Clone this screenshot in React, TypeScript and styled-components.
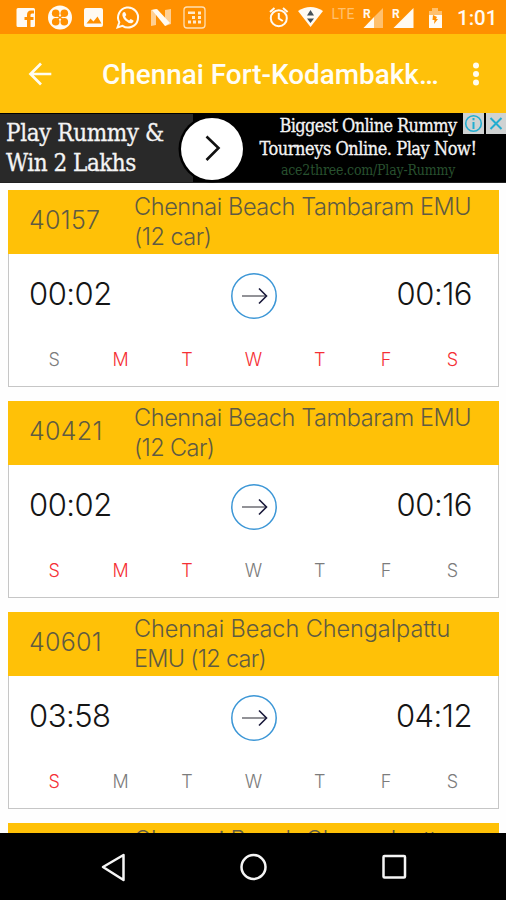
import React from 'react';
import styled, { createGlobalStyle } from 'styled-components';

const GlobalStyle = createGlobalStyle`
  * { box-sizing: border-box; }
  html, body { margin: 0; height: 100%; overflow: hidden; background: #fff; }
`;

const Screen = styled.div`
  width: 506px;
  height: 900px;
  display: flex;
  flex-direction: column;
  overflow: hidden;
  background: #fefefe;
  font-family: Inter, 'Liberation Sans', sans-serif;
`;

const StatusBar = styled.div`
  height: 34px;
  flex: none;
  background: #ff9000;
`;

const AppBar = styled.header`
  height: 79px;
  flex: none;
  display: flex;
  align-items: center;
  padding: 0 20px 0 28px;
  background: #ffc10a;
`;

const BackIcon = styled.svg`
  width: 24px;
  height: 24px;
  flex: none;
`;

const Title = styled.h1`
  margin: 2px 0 0 50px;
  width: 345px;
  white-space: nowrap;
  font: 500 27.9px/36px Roboto, sans-serif;
  color: #fffdf5;
`;

const MoreIcon = styled.svg`
  width: 10px;
  height: 26px;
  margin-left: auto;
  margin-right: 5px;
  flex: none;
`;

const AdBanner = styled.div`
  position: relative;
  height: 70px;
  flex: none;
  display: flex;
  background: #000;
  border-bottom: 1px solid #222;
  color: #f4f4f4;
  font-family: 'DejaVu Serif Condensed', 'DejaVu Serif', serif;
  font-stretch: condensed;
  white-space: nowrap;
  -webkit-text-stroke: 0.3px currentColor;
`;

const AdHeadline = styled.div`
  width: 193px;
  height: 68px;
  margin-top: 1px;
  padding: 4px 0 0 6px;
  background: #292929;
  font-size: 24px;
  line-height: 30px;
`;

const AdLine = styled.div<{ $spacing: number }>`
  letter-spacing: ${(p) => p.$spacing}px;
`;

const AdArrow = styled.svg`
  position: absolute;
  left: 178px;
  top: 2px;
  width: 68px;
  height: 68px;
`;

const AdCopy = styled.div`
  flex: 1;
  padding-right: 15px;
  display: flex;
  flex-direction: column;
  align-items: center;
  padding-left: 52px;
  font-size: 18px;
  line-height: 23px;
  padding-top: 1px;
`;

const AdLink = styled.div`
  font-size: 14px;
  line-height: 20px;
  letter-spacing: -0.2px;
  color: #28512f;
  -webkit-text-stroke: 0;
`;

const AdChoices = styled.svg`
  position: absolute;
  right: 0;
  top: 0;
  width: 43px;
  height: 21px;
`;

const TrainList = styled.main`
  flex: 1;
  min-height: 0;
  overflow: hidden;
  padding: 7px 7px 0 8px;
  display: flex;
  flex-direction: column;
  gap: 14px;
`;

const Card = styled.article`
  height: 197px;
  flex: none;
  display: flex;
  flex-direction: column;
  background: #fff;
  border: 1px solid #c6c6c6;
  border-top: 0;
`;

const CardHead = styled.div`
  height: 64px;
  margin: 0 -1px;
  flex: none;
  display: flex;
  background: #ffc107;
  color: #5f5b42;
  font-weight: 300;
`;

const TrainNumber = styled.div`
  width: 126px;
  padding-left: 21px;
  font-size: 25px;
  line-height: 60px;
  letter-spacing: 0.3px;
`;

const TrainName = styled.div`
  padding-top: 2px;
  font-size: 23.5px;
  line-height: 30px;
`;

const NameLine = styled.div<{ $tracking: number }>`
  white-space: nowrap;
  letter-spacing: ${(p) => p.$tracking}px;
`;

const Times = styled.div`
  height: 84px;
  display: flex;
  align-items: center;
  justify-content: space-between;
  padding: 0 26px 0 20px;
  font-size: 31px;
  font-weight: 300;
  color: #151515;
`;

const Time = styled.div<{ $end?: boolean }>`
  width: 100px;
  padding-bottom: 6px;
  letter-spacing: -0.5px;
  text-align: ${(p) => (p.$end ? 'right' : 'left')};
`;

const RouteIcon = styled.svg`
  width: 48px;
  height: 48px;
  margin-left: 6px;
`;

const Days = styled.div`
  display: grid;
  grid-template-columns: repeat(7, 66.4px);
  padding-left: 12px;
  line-height: 43px;
  font-size: 18px;
  font-weight: 300;
  text-align: center;
`;

const Day = styled.span<{ $runs: boolean }>`
  color: ${(p) => (p.$runs ? '#f52f35' : '#7c7c7c')};
`;

const NavBar = styled.nav`
  height: 67px;
  flex: none;
  background: #000;
`;

const StatusIcons = () => (
  <svg width="506" height="34" viewBox="0 0 506 34" fill="#fffaf2">
    <path fillRule="evenodd" d="M18 8h15.500a1.500 1.500 0 0 1 1.500 1.500v16a1.500 1.500 0 0 1-1.500 1.500H30.500v-7h3v-3h-3v-2q0-1.500 1.500-1.500h2v-3h-3q-4 0-4 4.500v2h-2.500v3H27v7h-9a1.500 1.500 0 0 1-1.500-1.500v-16A1.500 1.500 0 0 1 18 8z" />
    <circle cx="60" cy="17.500" r="12" />
    <g fill="#ff9000">
      <circle cx="55.700" cy="13.200" r="3.800" /><circle cx="64.300" cy="13.200" r="3.800" />
      <circle cx="55.700" cy="21.800" r="3.800" /><circle cx="64.300" cy="21.800" r="3.800" />
      <path d="M57 15.500l6 4M63 15.500l-6 4" stroke="#ff9000" strokeWidth="1.500" />
    </g>
    <rect x="84" y="8" width="19" height="19" rx="2" />
    <path d="M86.500 23.500l4-5 3 3 4-5 4 7z" fill="#ff9000" />
    <path d="M117.500 27.500l1.800-5.200a10 10 0 1 1 3.200 3.500z" fill="none" stroke="#fffaf2" strokeWidth="2" />
    <path d="M122.500 13.500q1.800-2.600 3-.5l.8 2-1.200 1.800q1.500 2.600 4 3.800l1.600-1.600 2.800 1.500q.5 1-1.400 2.500-2.400 1.300-6.800-2.500-3.600-3.800-2.800-7z" />
    <path d="M151 10l5-1v16l-5 1z" opacity=".6" /><path d="M165 10l6-1v15l-6 2z" opacity=".6" />
    <path d="M152 10l5-1 13 14-5 3z" />
    <rect x="184" y="7" width="21" height="21" rx="3" fill="none" stroke="#ffdfb2" strokeWidth="1.300" />
    <path d="M188 11.500h7v2.500h-7zM198 11.500h3v3h-3zM192 16h3v3h-3zM198 16h3v3h-3zM188 20.500h3v3h-3zM193 20.500h3v3h-3zM198 20.500h3v3h-3z" opacity=".85" />

    <g fill="none" stroke="#fffaf2" strokeWidth="2">
      <circle cx="278.800" cy="18.200" r="8" /><path d="M278.800 13v5.500l4 2.500M270 12l4.500-4M287.600 12L283 8" />
    </g>
    <path d="M298 11q12.500-8 25 0l-12.500 16z" />
    <path d="M307 15.500l3.500-5.500 3.500 5.500zM307 18.500h7l-3.500 4.500z" fill="#455057" />
    <text x="331.500" y="18.500" fontFamily="Roboto" fontSize="14" letterSpacing=".5" fill="#ffc170">LTE</text>
    <path d="M374 17l9-9v20h-9z" opacity=".45" /><path d="M363.500 28l10.500-11v11z" />
    <text x="363" y="17.500" fontFamily="Roboto" fontSize="12" fontWeight="700">R</text>
    <path d="M393.500 28l20-20v20z" />
    <text x="392" y="17.500" fontFamily="Roboto" fontSize="12" fontWeight="700">R</text>
    <path d="M432 8h6v3h4v5h-13v-5h3z" opacity=".45" /><path d="M429 15h13v13h-13z" />
    <path d="M433 15l4 2-1 2h2l-4 5 .5-4h-2z" fill="#ff9000" />
    <text x="457" y="25" fontFamily="Roboto" fontSize="20.500" fontWeight="500">1:01</text>
  </svg>
);

const trains = [
  { number: '40157', name: ['Chennai Beach Tambaram EMU', '(12 car)'], tracking: [-0.4, -0.5], from: '00:02', to: '00:16', runs: [0, 1, 1, 1, 1, 1, 1] },
  { number: '40421', name: ['Chennai Beach Tambaram EMU', '(12 Car)'], tracking: [-0.4, -0.6], from: '00:02', to: '00:16', runs: [1, 1, 1, 0, 0, 0, 0] },
  { number: '40601', name: ['Chennai Beach Chengalpattu', 'EMU (12 car)'], tracking: [-0.08, -0.7], from: '03:58', to: '04:12', runs: [1, 0, 0, 0, 0, 0, 0] },
  { number: '', name: ['Chennai Beach Chengalpattu'], tracking: [-0.08], from: '', to: '', runs: [] },
];

const weekdays = ['S', 'M', 'T', 'W', 'T', 'F', 'S'];

export default function App() {
  return (
    <Screen>
      <GlobalStyle />
      <StatusBar><StatusIcons /></StatusBar>
      <AppBar>
        <BackIcon viewBox="0 0 24 24" fill="none" stroke="#fffdf0" strokeWidth="2.700">
          <path d="M23.300 12H3M13 1.500L2.500 12 13 22.500" />
        </BackIcon>
        <Title>Chennai Fort-Kodambakk…</Title>
        <MoreIcon viewBox="0 0 10 26" fill="#fffdf0">
          <circle cx="5" cy="4.500" r="3" /><circle cx="5" cy="13" r="3" /><circle cx="5" cy="21.500" r="3" />
        </MoreIcon>
      </AppBar>
      <AdBanner>
        <AdHeadline>
          <AdLine $spacing={-0.4}>Play Rummy &amp;</AdLine>
          <AdLine $spacing={-0.5}>Win 2 Lakhs</AdLine>
        </AdHeadline>
        <AdArrow viewBox="0 0 68 68">
          <circle cx="34" cy="34" r="33.500" fill="#000" />
          <circle cx="34" cy="34" r="31" fill="#fff" />
          <path d="M28.500 21.500L40.500 33 28.500 45" fill="none" stroke="#111" strokeWidth="2.600" />
        </AdArrow>
        <AdCopy>
          <AdLine $spacing={-0.6}>Biggest Online Rummy</AdLine>
          <AdLine $spacing={-0.45}>Tourneys Online. Play Now!</AdLine>
          <AdLink>ace2three.com/Play-Rummy</AdLink>
        </AdCopy>
        <AdChoices viewBox="0 0 43 21" fill="none" stroke="#22add0" strokeWidth="1.600">
          <path d="M0 0h21v21H0zM23 0h20v21H23z" fill="#cfd2d2" stroke="none" />
          <circle cx="10.500" cy="10.500" r="7.800" />
          <path d="M10.500 9v7M10.500 5v2.200" strokeWidth="2" />
          <path d="M27.500 5l11 11M38.500 5l-11 11" strokeWidth="2" />
        </AdChoices>
      </AdBanner>
      <TrainList>
        {trains.map((t, i) => (
          <Card key={i}>
            <CardHead>
              <TrainNumber>{t.number}</TrainNumber>
              <TrainName>
                {t.name.map((line, j) => <NameLine key={j} $tracking={t.tracking[j]}>{line}</NameLine>)}
              </TrainName>
            </CardHead>
            {t.from && (
              <>
                <Times>
                  <Time>{t.from}</Time>
                  <RouteIcon viewBox="0 0 48 48" fill="none">
                    <circle cx="24" cy="24" r="22.200" stroke="#3b96d6" strokeWidth="1.500" />
                    <path d="M12 24h24" stroke="#77777d" strokeWidth="1.600" />
                    <path d="M29 16.500l7.500 7.500-7.500 7.500" stroke="#18183a" strokeWidth="1.600" />
                  </RouteIcon>
                  <Time $end>{t.to}</Time>
                </Times>
                <Days>
                  {weekdays.map((d, j) => <Day key={j} $runs={!!t.runs[j]}>{d}</Day>)}
                </Days>
              </>
            )}
          </Card>
        ))}
      </TrainList>
      <NavBar>
        <svg width="506" height="67" viewBox="0 0 506 67" fill="none" stroke="#f5f5f5" strokeWidth="2.500" strokeLinejoin="round">
          <path d="M123.500 22v25L103 34z" />
          <circle cx="253.500" cy="34" r="12" />
          <rect x="383.500" y="23" width="21.500" height="21.500" rx="1" />
        </svg>
      </NavBar>
    </Screen>
  );
}
